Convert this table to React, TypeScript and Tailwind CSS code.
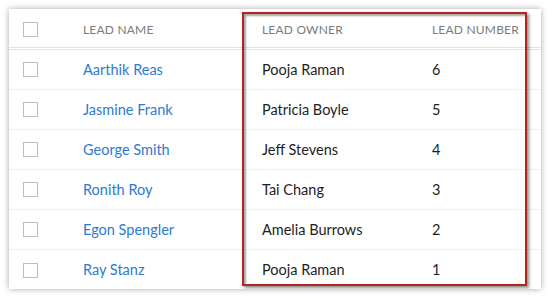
const leads = [
  { name: 'Aarthik Reas', owner: 'Pooja Raman', num: 6 },
  { name: 'Jasmine Frank', owner: 'Patricia Boyle', num: 5 },
  { name: 'George Smith', owner: 'Jeff Stevens', num: 4 },
  { name: 'Ronith Roy', owner: 'Tai Chang', num: 3 },
  { name: 'Egon Spengler', owner: 'Amelia Burrows', num: 2 },
  { name: 'Ray Stanz', owner: 'Pooja Raman', num: 1 },
]

function Checkbox() {
  return <div className="h-[15px] w-[15px] border border-[#bdbdbd] bg-white" />
}

export default function App() {
  return (
    <div className="h-[299px] w-[551px] bg-white p-[9px] pb-[10px] pr-[10px] font-['Lato',sans-serif]">
      <div className="relative h-[280px] w-[532px] overflow-hidden bg-white shadow-[0_0_6px_rgba(0,0,0,0.35)]">
        <div className="flex h-[41px] items-center border-b-[3px] border-double border-[#e3e3e3] text-[12px] tracking-[0.2px] text-[#7b7b7b]">
          <div className="w-[74px] pl-[14px] pt-[2px]">
            <Checkbox />
          </div>
          <div className="w-[179px] pt-[3px]">LEAD NAME</div>
          <div className="w-[170px] pt-[3px]">LEAD OWNER</div>
          <div className="pt-[3px]">LEAD NUMBER</div>
        </div>
        {leads.map((l, i) => (
          <div
            key={l.num}
            className={`flex h-[40px] items-center text-[14.5px] ${i < leads.length - 1 ? 'border-b border-[#f0f0f0]' : ''}`}
          >
            <div className="w-[74px] pl-[14px]">
              <Checkbox />
            </div>
            <div className="w-[179px] text-[#2d7ad4]">{l.name}</div>
            <div className="w-[170px] text-[#1e1e1e]">{l.owner}</div>
            <div className="text-[#1e1e1e]">{l.num}</div>
          </div>
        ))}
        <div className="absolute left-[233px] top-[3px] h-[274px] w-[285px] border-2 border-[#b3261e] shadow-[2px_2px_3px_rgba(0,0,0,0.45),inset_2px_2px_2px_rgba(0,0,0,0.35)]" />
      </div>
    </div>
  )
}
